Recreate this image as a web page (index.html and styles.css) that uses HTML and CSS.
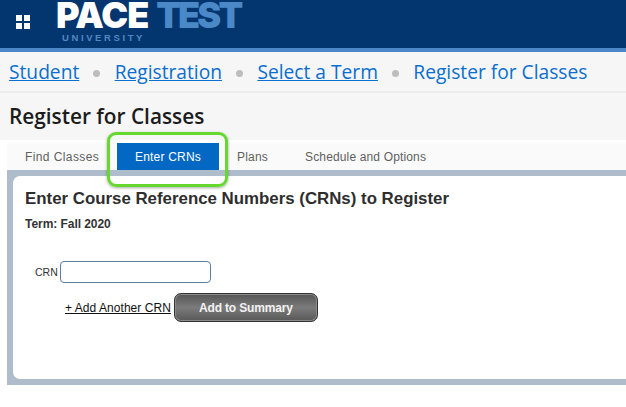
FILE: index.html
```html
<!DOCTYPE html>
<html lang="en">
<head>
<meta charset="utf-8">
<title>Register for Classes</title>
<link rel="stylesheet" href="styles.css">
</head>
<body>
<header class="topbar">
  <svg class="grid-icon" viewBox="0 0 14 14" width="14" height="14" aria-hidden="true">
    <rect x="0" y="0" width="6" height="6"/><rect x="8" y="0" width="6" height="6"/>
    <rect x="0" y="8" width="6" height="6"/><rect x="8" y="8" width="6" height="6"/>
  </svg>
  <div class="logo">
    <div class="logo-main"><span class="pace">PACE</span><span class="test">TEST</span></div>
    <div class="logo-sub">UNIVERSITY</div>
  </div>
</header>
<nav class="crumbs">
  <a href="#">Student</a><i class="dot"></i>
  <a href="#">Registration</a><i class="dot"></i>
  <a href="#">Select a Term</a><i class="dot"></i>
  <span class="current">Register for Classes</span>
</nav>
<div class="titlebar"><h1>Register for Classes</h1></div>
<div class="tabs-wrap">
  <div class="tabs">
    <span class="tab first">Find Classes</span>
    <span class="tab active">Enter CRNs</span>
    <span class="tab plans">Plans</span>
    <span class="tab sched">Schedule and Options</span>
  </div>
  <div class="highlight"></div>
  <section class="panel">
    <div class="card">
      <h2>Enter Course Reference Numbers (CRNs) to Register</h2>
      <p class="term">Term: Fall 2020</p>
      <div class="crn-row">
        <label class="crn-label" for="crn">CRN</label>
        <input class="crn-input" id="crn" type="text">
      </div>
      <div class="action-row">
        <a class="add-link" href="#">+ Add Another CRN</a>
        <button class="add-btn" type="button">Add to Summary</button>
      </div>
    </div>
  </section>
</div>
</body>
</html>
```
FILE: styles.css
```css
* { box-sizing: border-box; }
html, body { margin: 0; padding: 0; }
body { width: 626px; height: 407px; overflow: hidden; background: #fff; font-family: "Liberation Sans", Arial, sans-serif; }

.topbar { height: 52px; background: #03366f; border-bottom: 4px solid #4a88c7; display: flex; align-items: flex-start; padding-left: 16px; overflow: hidden; }
.grid-icon { fill: #fff; margin-top: 15px; flex: none; }
.logo { margin-left: 26px; width: 190px; }
.logo-main { height: 30px; display: flex; font-family: "Inter", sans-serif; font-weight: 900; font-size: 36px; line-height: 30px; }
.pace { color: #fff; letter-spacing: -1px; }
.test { color: #4a88c7; letter-spacing: -2.8px; margin-left: 8px; }
.logo-sub { margin-top: 3px; margin-left: 6px; font-family: "Liberation Sans", sans-serif; font-weight: 700; font-size: 9.5px; line-height: 10px; letter-spacing: 2.6px; color: #5288c2; }

.crumbs { height: 41px; background: #f6f6f6; border-bottom: 2px solid #ececec; display: flex; align-items: center; padding: 0 0 0 9px; font-family: "Open Sans", sans-serif; font-size: 19.2px; }
.crumbs a { color: #0a6fd0; text-decoration: underline; }
.current { color: #0a6fd0; }
.dot { width: 7px; height: 7px; border-radius: 50%; background: #bdbdbd; margin: 3px 14.4px 0 14px; }

.titlebar { height: 50px; background: #f6f6f6; border-bottom: 3px solid #fff; padding: 9px 0 0 9px; }
.titlebar h1 { margin: 0; font-family: "Open Sans", sans-serif; font-weight: 600; font-size: 20.8px; line-height: 28px; color: #1c1c1c; }

.tabs-wrap { position: relative; margin-left: 7px; width: 619px; }
.tabs { height: 27px; display: flex; background: #fafafa; font-size: 12px; letter-spacing: .2px; color: #5f5f5f; }
.tab { display: flex; align-items: center; height: 27px; }
.first { margin-left: 18px; width: 92px; letter-spacing: .4px; }
.active { width: 102px; justify-content: center; background: #0268c4; color: #fff; }
.plans { margin-left: 18px; width: 68px; }
.sched { letter-spacing: .15px; }

.highlight { position: absolute; left: 100px; top: -11px; width: 121px; height: 55px; border: 3px solid #66d92f; border-radius: 9px; box-shadow: 0 1px 3px rgba(0,0,0,.35); z-index: 2; }

.panel { height: 215px; background: #aebccb; padding: 6px 0 6px 6px; }
.card { height: 203px; background: #fff; border-radius: 7px 0 0 7px; padding: 14px 0 0 12px; color: #333; }
.card h2 { margin: 0; font-size: 16.85px; line-height: 18px; font-weight: 700; color: #2e2e2e; }
.term { margin: 9px 0 0; font-size: 12px; line-height: 14px; font-weight: 700; color: #333; letter-spacing: -.05px; }

.crn-row { display: flex; align-items: center; margin-top: 30px; padding-left: 10px; }
.crn-label { font-size: 10.5px; color: #333; width: 25px; }
.crn-input { width: 151px; height: 22px; border: 1px solid #5f7d99; border-radius: 4px; background: #fff; padding: 0; outline: none; }

.action-row { display: flex; align-items: center; margin-top: 10px; padding-left: 40px; }
.add-link { font-size: 12px; letter-spacing: .05px; color: #111; text-decoration: underline; }
.add-btn { margin-left: 3px; width: 144px; height: 29px; border: 1px solid #333; border-radius: 7px; background: linear-gradient(#555, #7b7b7b 50%, #585858); box-shadow: inset 0 0 0 1px #8b8b8b; color: #f2f2f2; font-family: "Liberation Sans", sans-serif; font-size: 12px; letter-spacing: -.15px; font-weight: 700; padding: 0; }
```
